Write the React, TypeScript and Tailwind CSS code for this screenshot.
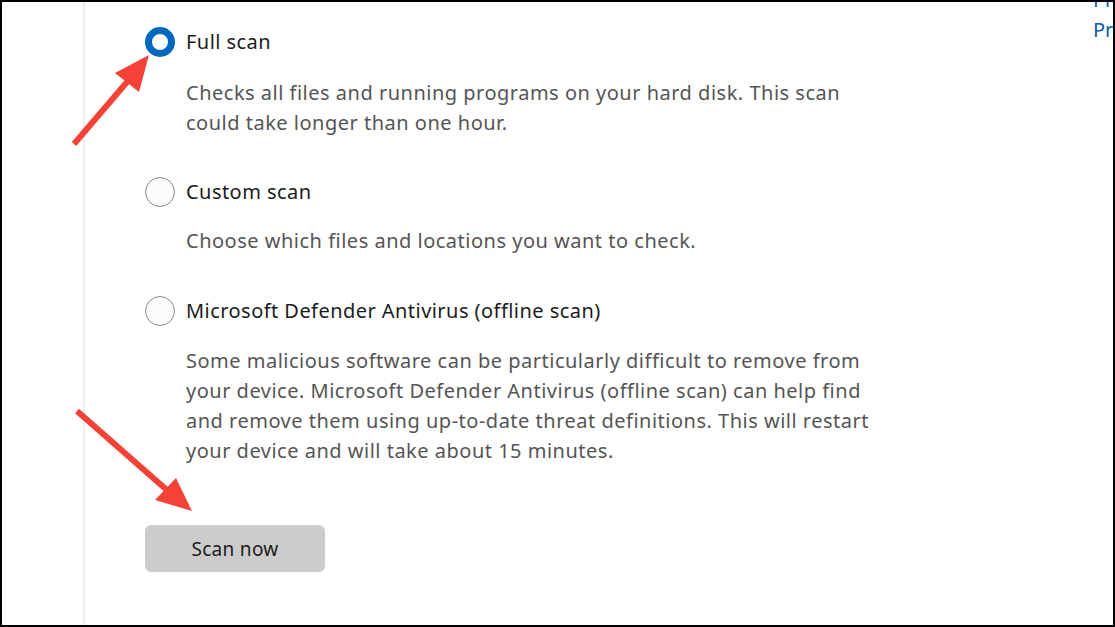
const font = { fontFamily: '"Noto Sans", "Open Sans", sans-serif' };

const Radio = ({ checked }: { checked?: boolean }) =>
	checked ? (
		<span className="box-border block h-[30px] w-[30px] shrink-0 rounded-full border-[7px] border-[#0067c0] bg-white" />
	) : (
		<span className="box-border block h-[30px] w-[30px] shrink-0 rounded-full border border-[#8a8a8a] bg-[#fbfbfb]" />
	);

const Option = ({ label, checked }: { label: string; checked?: boolean }) => (
	<div className="flex h-[30px] items-center gap-[11px]">
		<Radio checked={checked} />
		<span className="text-[20px] leading-[30px] tracking-[0.45px] text-[#1b1b1b]">{label}</span>
	</div>
);

const Description = ({ lines }: { lines: string[] }) => (
	<p className="ml-[41px] w-[740px] text-[20px] leading-[30px] tracking-[0.5px] text-[#555]">
		{lines.map((line) => (
			<span key={line} className="block whitespace-nowrap">
				{line}
			</span>
		))}
	</p>
);

const Arrows = () => (
	<svg className="pointer-events-none absolute inset-0" width="1115" height="627" viewBox="0 0 1115 627">
		<line x1="72" y1="142" x2="125" y2="80" stroke="#f44336" strokeWidth="6" />
		<polygon points="147,53 113,71 137,90" fill="#f44336" />
		<line x1="75" y1="409" x2="166" y2="489" stroke="#f44336" strokeWidth="6" />
		<polygon points="190,509 153,498 174,476" fill="#f44336" />
	</svg>
);

export default function App() {
	return (
		<div className="relative box-border flex h-[627px] w-[1115px] overflow-hidden border-2 border-black bg-white" style={font}>
			<div className="w-[81px] shrink-0" />
			<div className="w-[2px] shrink-0 bg-[#eeeeee]" />
			<div className="flex flex-1 flex-col pl-[60px] pt-[25px]">
				<Option label="Full scan" checked />
				<div className="mt-[21px]">
					<Description
						lines={[
							'Checks all files and running programs on your hard disk. This scan',
							'could take longer than one hour.',
						]}
					/>
				</div>
				<div className="mt-[39px]">
					<Option label="Custom scan" />
				</div>
				<div className="mt-[19px]">
					<Description lines={['Choose which files and locations you want to check.']} />
				</div>
				<div className="mt-[40px]">
					<Option label="Microsoft Defender Antivirus (offline scan)" />
				</div>
				<div className="mt-[20px]">
					<Description
						lines={[
							'Some malicious software can be particularly difficult to remove from',
							'your device. Microsoft Defender Antivirus (offline scan) can help find',
							'and remove them using up-to-date threat definitions. This will restart',
							'your device and will take about 15 minutes.',
						]}
					/>
				</div>
				<button className="mt-[59px] h-[47px] w-[180px] rounded-[6px] bg-[#cccccc] pt-[2px] text-[19px] tracking-[0.3px] text-[#1b1b1b]">
					Scan now
				</button>
			</div>
			<div className="flex w-[20px] shrink-0 flex-col overflow-hidden whitespace-nowrap text-[20px] text-[#0f5aa8]">
				<span className="-mt-[17px] leading-[30px]">Privacy</span>
				<span className="leading-[30px]">Privacy</span>
			</div>
			<Arrows />
		</div>
	);
}
